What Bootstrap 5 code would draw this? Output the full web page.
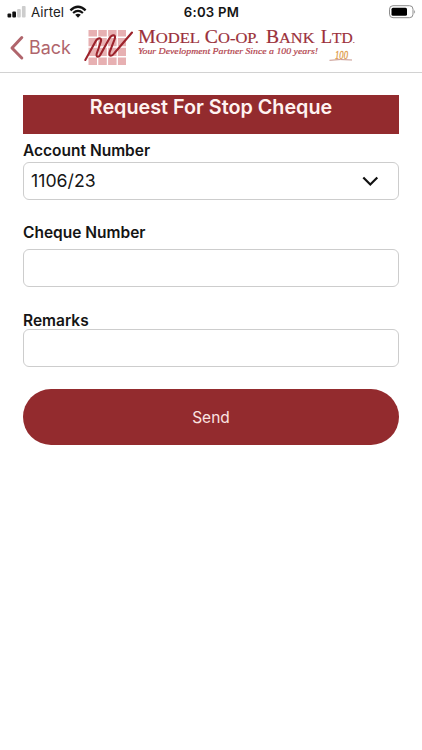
<!DOCTYPE html>
<html lang="en">
<head>
<meta charset="utf-8">
<meta name="viewport" content="width=device-width, initial-scale=1">
<title>Request For Stop Cheque</title>
<link href="https://cdn.jsdelivr.net/npm/bootstrap@5.3.0/dist/css/bootstrap.min.css" rel="stylesheet">
<style>
  :root { --brand: #932b2e; }
  body { font-family: Inter, "Liberation Sans", sans-serif; color: #151515; background: #fff; min-height: 750px; }
  svg { display: block; flex: none; }
  .status-bar { height: 24px; padding: 0 6px 0 7px; }
  .status-bar .side { width: 120px; }
  .carrier { font-size: 13px; line-height: 24px; }
  .clock { font-size: 13.2px; line-height: 24px; font-weight: 600; letter-spacing: .25px; }
  .app-bar { height: 49px; border-bottom: 1px solid #d2d2d2; padding-left: 9px; }
  .back-link { font-size: 18.3px; line-height: 24px; color: #b0656c; width: 71px; }
  .stop-form { padding: 22px 23px 0; }
  .page-title { height: 39px; background: var(--brand); color: #fff3f1; font-size: 19.75px; line-height: 24px; font-weight: 600; }
  .stop-form .form-label { font-size: 15.5px; line-height: 20px; font-weight: 600; margin: 0; }
  .stop-form .form-control { height: 38px; border: 1px solid #cdcdcd; border-radius: 6px; padding: 0 19px 0 7px; background: #fff; color: #151515; font-size: 17.7px; line-height: 34px; }
  .account-group { padding-top: 7px; margin-bottom: 23px; }
  .account-group .form-label { height: 21px; }
  .cheque-group { margin-bottom: 24px; }
  .cheque-group .form-label { height: 26px; }
  .remarks-group { margin-bottom: 22px; }
  .remarks-group .form-label { height: 18px; }
  .send-btn { height: 56px; background: var(--brand); color: #fbe3e1; font-size: 15.5px; border: 0; padding-top: 8px; }
  .send-btn:hover { background: #7f2326; color: #fff; }
</style>
<script src="https://cdn.jsdelivr.net/npm/bootstrap@5.3.0/dist/js/bootstrap.bundle.min.js"></script>
</head>
<body>
<header>
  <div class="status-bar d-flex align-items-center justify-content-between">
    <div class="side d-flex align-items-center">
      <svg width="20" height="14" viewBox="0 0 20 14" aria-hidden="true">
        <rect x="0.5" y="8.500" width="3.700" height="4" rx="1" fill="#111"/>
        <rect x="5.300" y="6.500" width="3.700" height="6" rx="1" fill="#111"/>
        <rect x="10.100" y="4" width="3.700" height="8.500" rx="1" fill="#cdcdcd"/>
        <rect x="14.900" y="1" width="3.700" height="11.500" rx="1" fill="#cdcdcd"/>
      </svg>
      <span class="carrier ms-1"><svg width="34" height="24" viewBox="0 0 34 24"><text x="0" y="16.500" textLength="33" lengthAdjust="spacingAndGlyphs" fill="#222">Airtel</text></svg></span>
      <svg class="ms-1" width="18" height="14" viewBox="0 0 18 14" fill="none" stroke="#111" aria-hidden="true">
        <path d="M1.400 5.300Q9 -1.600 16.600 5.300" stroke-width="2.400"/>
        <path d="M4.100 8Q9 3.700 13.900 8" stroke-width="2.200"/>
        <path d="M6.200 9.800Q9 7.700 11.800 9.800L9 12.700Z" fill="#111" stroke="none"/>
      </svg>
    </div>
    <span class="clock">6:03 PM</span>
    <div class="side d-flex justify-content-end">
      <svg width="28" height="14" viewBox="0 0 28 14" aria-hidden="true">
        <rect x="1.500" y="0.700" width="23.500" height="12" rx="3.500" fill="#fff" stroke="#8d8d8d"/>
        <rect x="3.500" y="2.700" width="15.500" height="8" rx="1.500" fill="#000"/>
        <path d="M26.200 4.700Q28 6.700 26.200 8.700Z" fill="#8d8d8d"/>
      </svg>
    </div>
  </div>
  <nav class="app-bar d-flex align-items-center">
    <a href="#" class="back-link d-flex align-items-center text-decoration-none">
      <svg width="16" height="26" viewBox="0 0 16 26" fill="none" aria-hidden="true"><path d="M12.800 2.500L3 13L12.800 23" stroke="#b0656c" stroke-width="3" stroke-linecap="round" stroke-linejoin="round"/></svg>
      <svg width="48" height="24" viewBox="0 0 48 24"><text x="4" y="18.200" textLength="42" lengthAdjust="spacingAndGlyphs" fill="#b0656c">Back</text></svg>
    </a>
    <svg width="280" height="48" viewBox="80 24 280 48" role="img" aria-label="Model Co-op. Bank Ltd.">
      <g fill="#e7b0b2">
        <path d="M88.500 30h8.500v6.500h-8.500zM98.300 30h8.500v6.500h-8.500zM108.100 30h8.500v6.500h-8.500zM117.900 30h8.100v6.500h-8.100z"/>
        <path d="M88.500 38h8.500v8.300h-8.500zM98.300 38h8.500v8.300h-8.500zM108.100 38h8.500v8.300h-8.500zM117.900 38h8.100v8.300h-8.100z"/>
        <path d="M88.500 47.800h8.500v8.300h-8.500zM98.300 47.800h8.500v8.300h-8.500zM108.100 47.800h8.500v8.300h-8.500zM117.900 47.800h8.100v8.300h-8.100z"/>
        <path d="M88.500 57.600h8.500v7.400h-8.500zM98.300 57.600h8.500v7.400h-8.500zM108.100 57.600h8.500v7.400h-8.500zM117.900 57.600h8.100v7.400h-8.100z"/>
      </g>
      <path d="M85.300 60L95.500 41.500Q97.500 38 99.800 38.300Q101.800 38.800 100.700 42L96.800 53.500Q96 56.800 98 56.800Q99.500 56.800 100.800 54L109.300 38.500Q111.500 34.800 113.800 35.300Q115.800 36 114.500 39.500L109.800 51.500Q108.500 55.500 110.800 55.700Q112.500 55.800 114.500 53L132 32.500" fill="none" stroke="#9c222b" stroke-width="2.100" stroke-linecap="round"/>
      <g font-family="'Liberation Serif', serif" fill="#9b303a" stroke="#9b303a" stroke-width=".2">
        <text x="138" y="43" font-size="18.500" textLength="62" lengthAdjust="spacingAndGlyphs">M<tspan font-size="15.500">ODEL</tspan></text>
        <text x="204.800" y="43" font-size="18.500" textLength="54" lengthAdjust="spacingAndGlyphs">C<tspan font-size="15.500">O-OP.</tspan></text>
        <text x="266" y="43" font-size="18.500" textLength="48.500" lengthAdjust="spacingAndGlyphs">B<tspan font-size="15.500">ANK</tspan></text>
        <text x="320.800" y="43" font-size="18.500" textLength="34" lengthAdjust="spacingAndGlyphs">L<tspan font-size="15.500">TD</tspan><tspan font-size="8">.</tspan></text>
      </g>
      <text x="138" y="54.300" font-family="'Liberation Serif', serif" font-style="italic" font-size="9.200" fill="#b23f4c" stroke="#b23f4c" stroke-width=".2" textLength="180" lengthAdjust="spacingAndGlyphs">Your Development Partner Since a 100 years!</text>
      <text x="335" y="59" font-family="'Liberation Serif', serif" font-style="italic" font-size="13" fill="#e09a48" stroke="#e09a48" stroke-width=".3" textLength="13" lengthAdjust="spacingAndGlyphs">100</text>
      <path d="M329.500 60.300Q340 59 352 60" fill="none" stroke="#c7958c" stroke-width="1"/>
    </svg>
  </nav>
</header>
<main class="stop-form">
  <h1 class="page-title text-center mb-0">Request For Stop Cheque</h1>
  <form>
    <div class="account-group">
      <label class="form-label d-block" for="account">Account Number</label>
      <button type="button" id="account" class="form-control d-flex align-items-center justify-content-between">
        <span>1106/23</span>
        <svg width="18" height="12" viewBox="0 0 18 12" fill="none" aria-hidden="true"><path d="M2.300 2.500L9.300 9.500L16.300 2.500" stroke="#111" stroke-width="2.200"/></svg>
      </button>
    </div>
    <div class="cheque-group">
      <label class="form-label d-block" for="cheque">Cheque Number</label>
      <input type="text" id="cheque" class="form-control">
    </div>
    <div class="remarks-group">
      <label class="form-label d-block" for="remarks">Remarks</label>
      <input type="text" id="remarks" class="form-control">
    </div>
    <button type="button" class="btn send-btn rounded-pill w-100">Send</button>
  </form>
</main>
</body>
</html>
